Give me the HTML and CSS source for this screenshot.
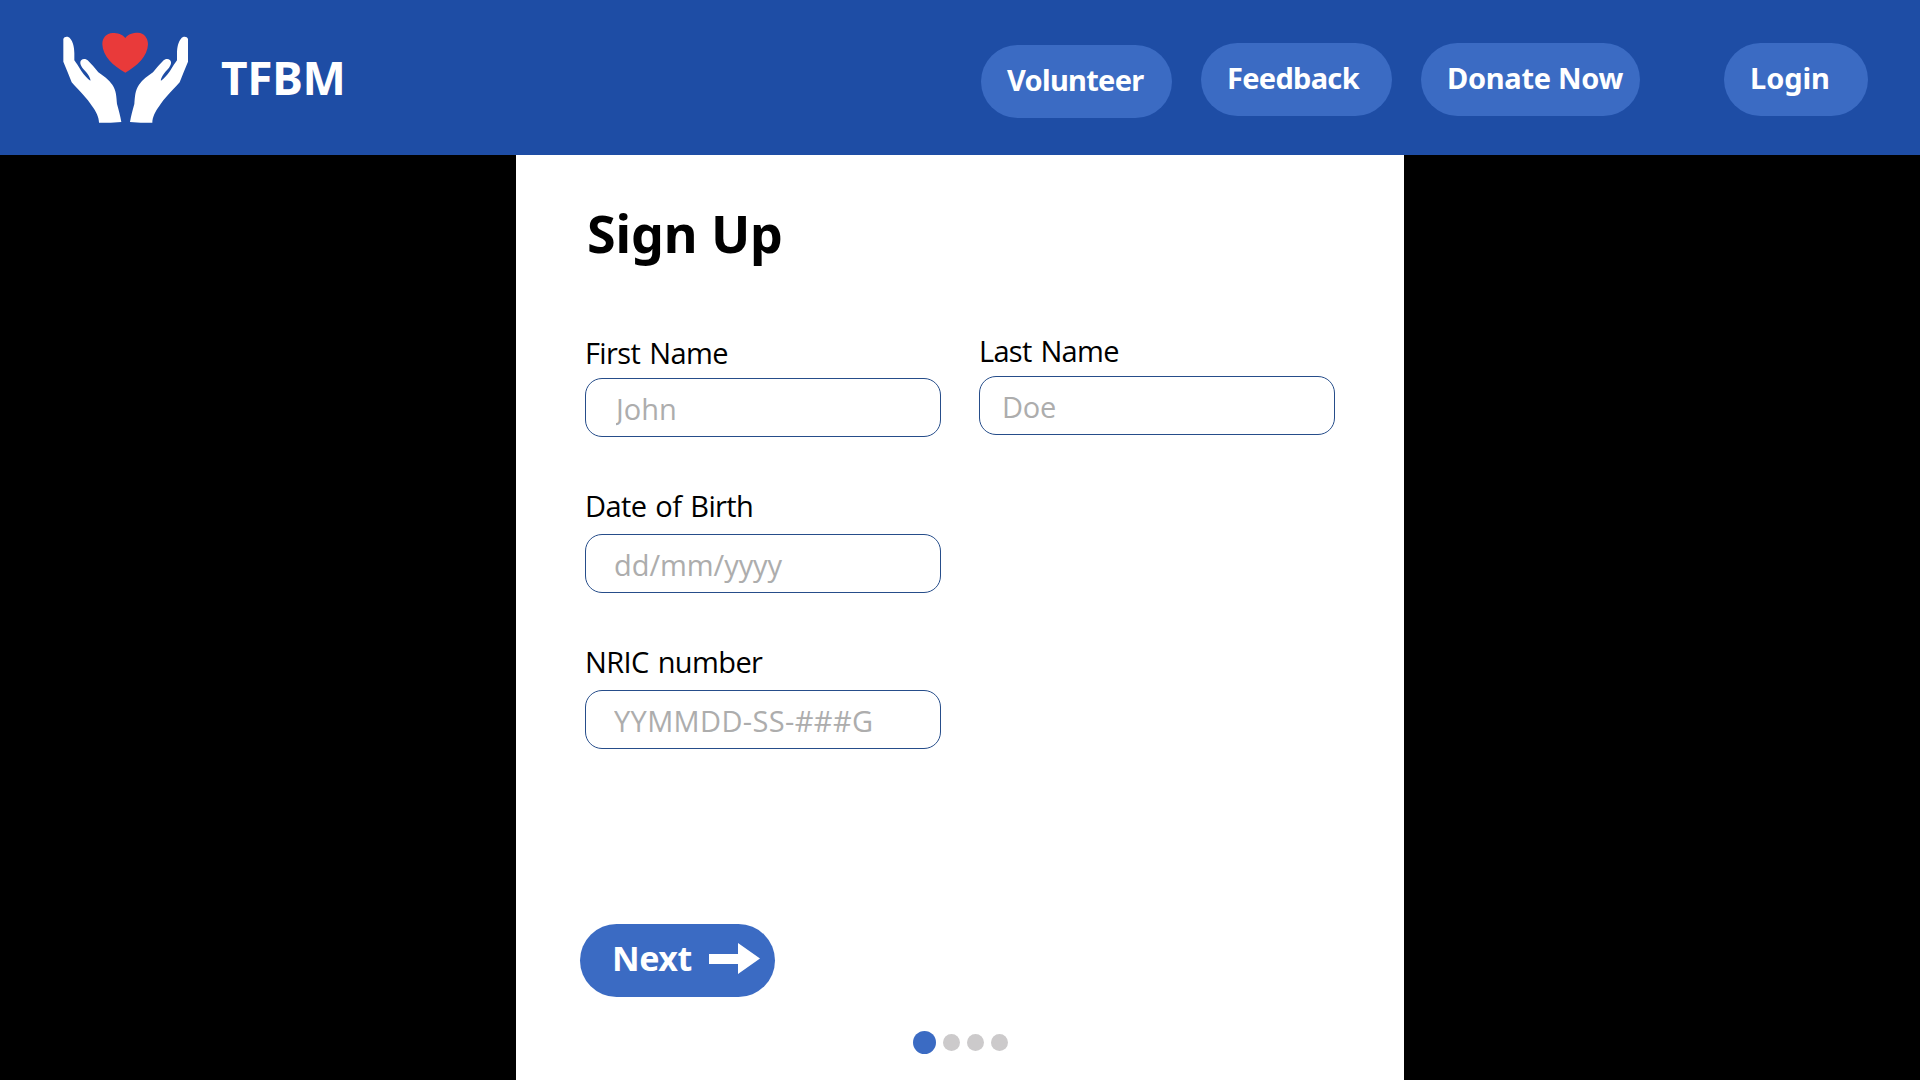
FILE: index.html
```
<!DOCTYPE html>
<html lang="en">
<head>
<meta charset="utf-8">
<title>TFBM - Sign Up</title>
<link rel="stylesheet" href="styles.css">
</head>
<body>
<header class="topbar">
  <div class="brand">
    <svg class="logo" viewBox="66 66 384 276" aria-hidden="true">
      <defs>
        <path id="hand" d="M70 87C73 78 86 79 91 86C99 95 103 112 103 130V151C108 158 115 168 124 183C134 197 142 206 151 212C153 209 148 198 140 188C130 178 120 167 121 157C121 147 134 143 143 151C154 162 165 174 175 187C190 197 206 209 217 224C229 241 229 260 231 282C236 301 241 317 244 336L212 338H177C177 322 168 304 156 288C142 266 118 243 95 217L83 187L70 155Z"/>
      </defs>
      <use href="#hand" fill="#fff"/>
      <use href="#hand" fill="#fff" transform="translate(514 0) scale(-1 1)"/>
      <path fill="#e93a3a" d="M256 84C247 72 232 69 218 69C199 70 187 83 187 103C188 138 220 169 256 188C291 169 323 138 324 103C324 83 312 69 294 68C278 68 263 73 256 84Z"/>
    </svg>
    <span class="brand-name">TFBM</span>
  </div>
  <nav class="menu">
    <a class="pill pill-volunteer">Volunteer</a>
    <a class="pill pill-feedback">Feedback</a>
    <a class="pill pill-donate">Donate Now</a>
    <a class="pill pill-login">Login</a>
  </nav>
</header>
<main class="panel">
  <h1 class="title">Sign Up</h1>
  <form class="form">
    <div class="field">
      <label class="label label-first" for="first">First Name</label>
      <input class="input" id="first" type="text" placeholder="John">
    </div>
    <div class="field field-last">
      <label class="label label-last" for="last">Last Name</label>
      <input class="input input-last" id="last" type="text" placeholder="Doe">
    </div>
    <div class="field field-spaced">
      <label class="label" for="dob">Date of Birth</label>
      <input class="input input-dob" id="dob" type="text" placeholder="dd/mm/yyyy">
    </div>
    <div class="field field-spaced">
      <label class="label" for="nric">NRIC number</label>
      <input class="input input-nric" id="nric" type="text" placeholder="YYMMDD-SS-###G">
    </div>
  </form>
  <button class="next" type="button">
    <span class="next-text">Next</span>
    <svg class="arrow" viewBox="0 0 51 31" aria-hidden="true"><path fill="#fff" d="M0 11H29V0L51 15.5L29 31V21H0Z"/></svg>
  </button>
  <div class="steps">
    <span class="dot dot-active"></span>
    <span class="dot"></span>
    <span class="dot"></span>
    <span class="dot"></span>
  </div>
</main>
</body>
</html>
```
FILE: styles.css
```
* { box-sizing: border-box; }

body {
  margin: 0;
  height: 1080px;
  overflow: hidden;
  background: #000;
  font-family: "Open Sans", "Noto Sans", sans-serif;
}

.topbar {
  display: flex;
  justify-content: space-between;
  height: 155px;
  padding: 0 52px 0 62px;
  background: #1e4da5;
}

.brand {
  display: flex;
  align-items: flex-start;
  gap: 31px;
  padding-top: 32px;
}

.logo { width: 128px; height: 92px; }

.brand-name {
  margin-top: 15px;
  color: #fff;
  font: 700 46px/60px "Noto Sans", sans-serif;
  letter-spacing: -0.3px;
}

.menu {
  display: flex;
  align-items: flex-start;
  padding-top: 43px;
}

.pill {
  height: 73px;
  padding-left: 26px;
  border-radius: 36.5px;
  background: #3b6bc3;
  color: #fff;
  font: 700 29px/70px "Noto Sans", sans-serif;
  white-space: nowrap;
}

.pill-volunteer { width: 191px; margin: 2px 29px 0 0; letter-spacing: -0.7px; }
.pill-feedback { width: 191px; margin-right: 29px; letter-spacing: -0.7px; }
.pill-donate { width: 219px; margin-right: 84px; letter-spacing: -0.29px; }
.pill-login { width: 144px; letter-spacing: -0.08px; }

.panel {
  display: flex;
  flex-direction: column;
  width: 888px;
  height: 925px;
  margin: 0 auto;
  padding: 43px 64px 0;
  background: #fff;
}

.title {
  width: max-content;
  margin: 0 0 0 7px;
  font: 700 52px/70px "Noto Sans", sans-serif;
  letter-spacing: -0.1px;
}

.form {
  display: grid;
  grid-template-columns: 356px 356px;
  column-gap: 38px;
  margin: 65px 0 0 5px;
}

.field {
  display: flex;
  flex-direction: column;
  grid-column: 1;
}

.field-last { grid-column: 2; grid-row: 1; margin-top: -2px; }
.field-spaced { padding-top: 49px; }

.label {
  height: 48px;
  font-size: 29px;
  line-height: 40px;
  letter-spacing: -0.6px;
  word-spacing: 2px;
}

.label-first, .label-last { height: 45px; }
.label-last { letter-spacing: -0.7px; }

.input {
  width: 356px;
  height: 59px;
  padding: 1px 10px 0 30px;
  border: 1px solid #264d8a;
  border-radius: 17px;
  background: #fff;
  font: 400 29px "Open Sans", sans-serif;
  letter-spacing: 0;
}

.input::placeholder { color: #adadad; opacity: 1; }
.input-last { padding-left: 22px; letter-spacing: -0.2px; }
.input-dob { padding-left: 28px; letter-spacing: -0.05px; }
.input-nric { padding-left: 28px; letter-spacing: 0.36px; }

.next {
  display: flex;
  align-items: flex-start;
  width: 195px;
  height: 73px;
  margin-top: 175px;
  padding: 0 0 0 32px;
  border: 0;
  border-radius: 36.5px;
  background: #3b6bc3;
  color: #fff;
}

.next-text {
  width: 97px;
  font: 700 34px/68px "Noto Sans", sans-serif;
  letter-spacing: -0.5px;
  text-align: left;
}

.arrow { width: 51px; height: 31px; margin-top: 19px; }

.steps {
  display: flex;
  align-items: center;
  gap: 7px;
  margin: 34px 0 0 333px;
}

.dot {
  width: 17px;
  height: 17px;
  border-radius: 50%;
  background: #cccacb;
}

.dot-active { width: 23px; height: 23px; background: #3b6bc3; }
```
